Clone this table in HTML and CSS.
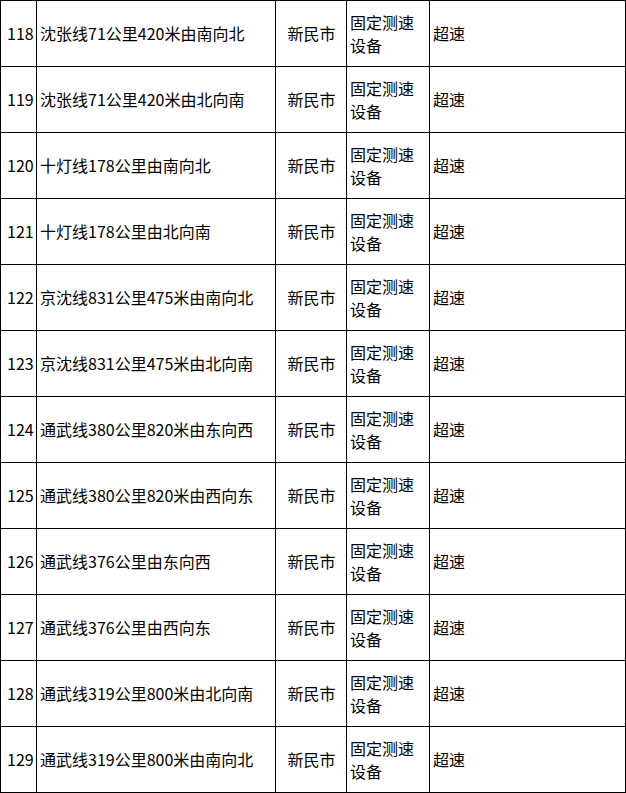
FILE: index.html
```html
<!DOCTYPE html>
<html lang="zh-CN">
<head>
<meta charset="utf-8">
<link rel="stylesheet" href="styles.css">
</head>
<body>
<table class="sheet">
<colgroup>
<col class="c-no"><col class="c-loc"><col class="c-city"><col class="c-dev"><col class="c-type">
</colgroup>
<tbody>
<tr><td class="no">118</td><td>沈张线71公里420米由南向北</td><td class="city">新民市</td><td>固定测速设备</td><td>超速</td></tr>
<tr><td class="no">119</td><td>沈张线71公里420米由北向南</td><td class="city">新民市</td><td>固定测速设备</td><td>超速</td></tr>
<tr><td class="no">120</td><td>十灯线178公里由南向北</td><td class="city">新民市</td><td>固定测速设备</td><td>超速</td></tr>
<tr><td class="no">121</td><td>十灯线178公里由北向南</td><td class="city">新民市</td><td>固定测速设备</td><td>超速</td></tr>
<tr><td class="no">122</td><td>京沈线831公里475米由南向北</td><td class="city">新民市</td><td>固定测速设备</td><td>超速</td></tr>
<tr><td class="no">123</td><td>京沈线831公里475米由北向南</td><td class="city">新民市</td><td>固定测速设备</td><td>超速</td></tr>
<tr><td class="no">124</td><td>通武线380公里820米由东向西</td><td class="city">新民市</td><td>固定测速设备</td><td>超速</td></tr>
<tr><td class="no">125</td><td>通武线380公里820米由西向东</td><td class="city">新民市</td><td>固定测速设备</td><td>超速</td></tr>
<tr><td class="no">126</td><td>通武线376公里由东向西</td><td class="city">新民市</td><td>固定测速设备</td><td>超速</td></tr>
<tr><td class="no">127</td><td>通武线376公里由西向东</td><td class="city">新民市</td><td>固定测速设备</td><td>超速</td></tr>
<tr><td class="no">128</td><td>通武线319公里800米由北向南</td><td class="city">新民市</td><td>固定测速设备</td><td>超速</td></tr>
<tr><td class="no">129</td><td>通武线319公里800米由南向北</td><td class="city">新民市</td><td>固定测速设备</td><td>超速</td></tr>
</tbody>
</table>
</body>
</html>
```
FILE: styles.css
```css
html, body {
  margin: 0;
  padding: 0;
  background: #ffffff;
}
.sheet {
  border-collapse: collapse;
  table-layout: fixed;
  width: 625px;
  font-family: "Noto Sans CJK SC", "Noto Sans", sans-serif;
  font-size: 16px;
  line-height: 23px;
  color: #000000;
}
.c-no { width: 36px; }
.c-loc { width: 239px; }
.c-city { width: 71px; }
.c-dev { width: 83px; }
.c-type { width: 196px; }
.sheet td {
  border: 1px solid #000000;
  height: 66px;
  padding: 0 2px 0 3px;
  vertical-align: middle;
  text-align: left;
  box-sizing: border-box;
}
.sheet td.no {
  padding-left: 6px;
  padding-right: 0;
}
.sheet td.city {
  text-align: center;
}
```
